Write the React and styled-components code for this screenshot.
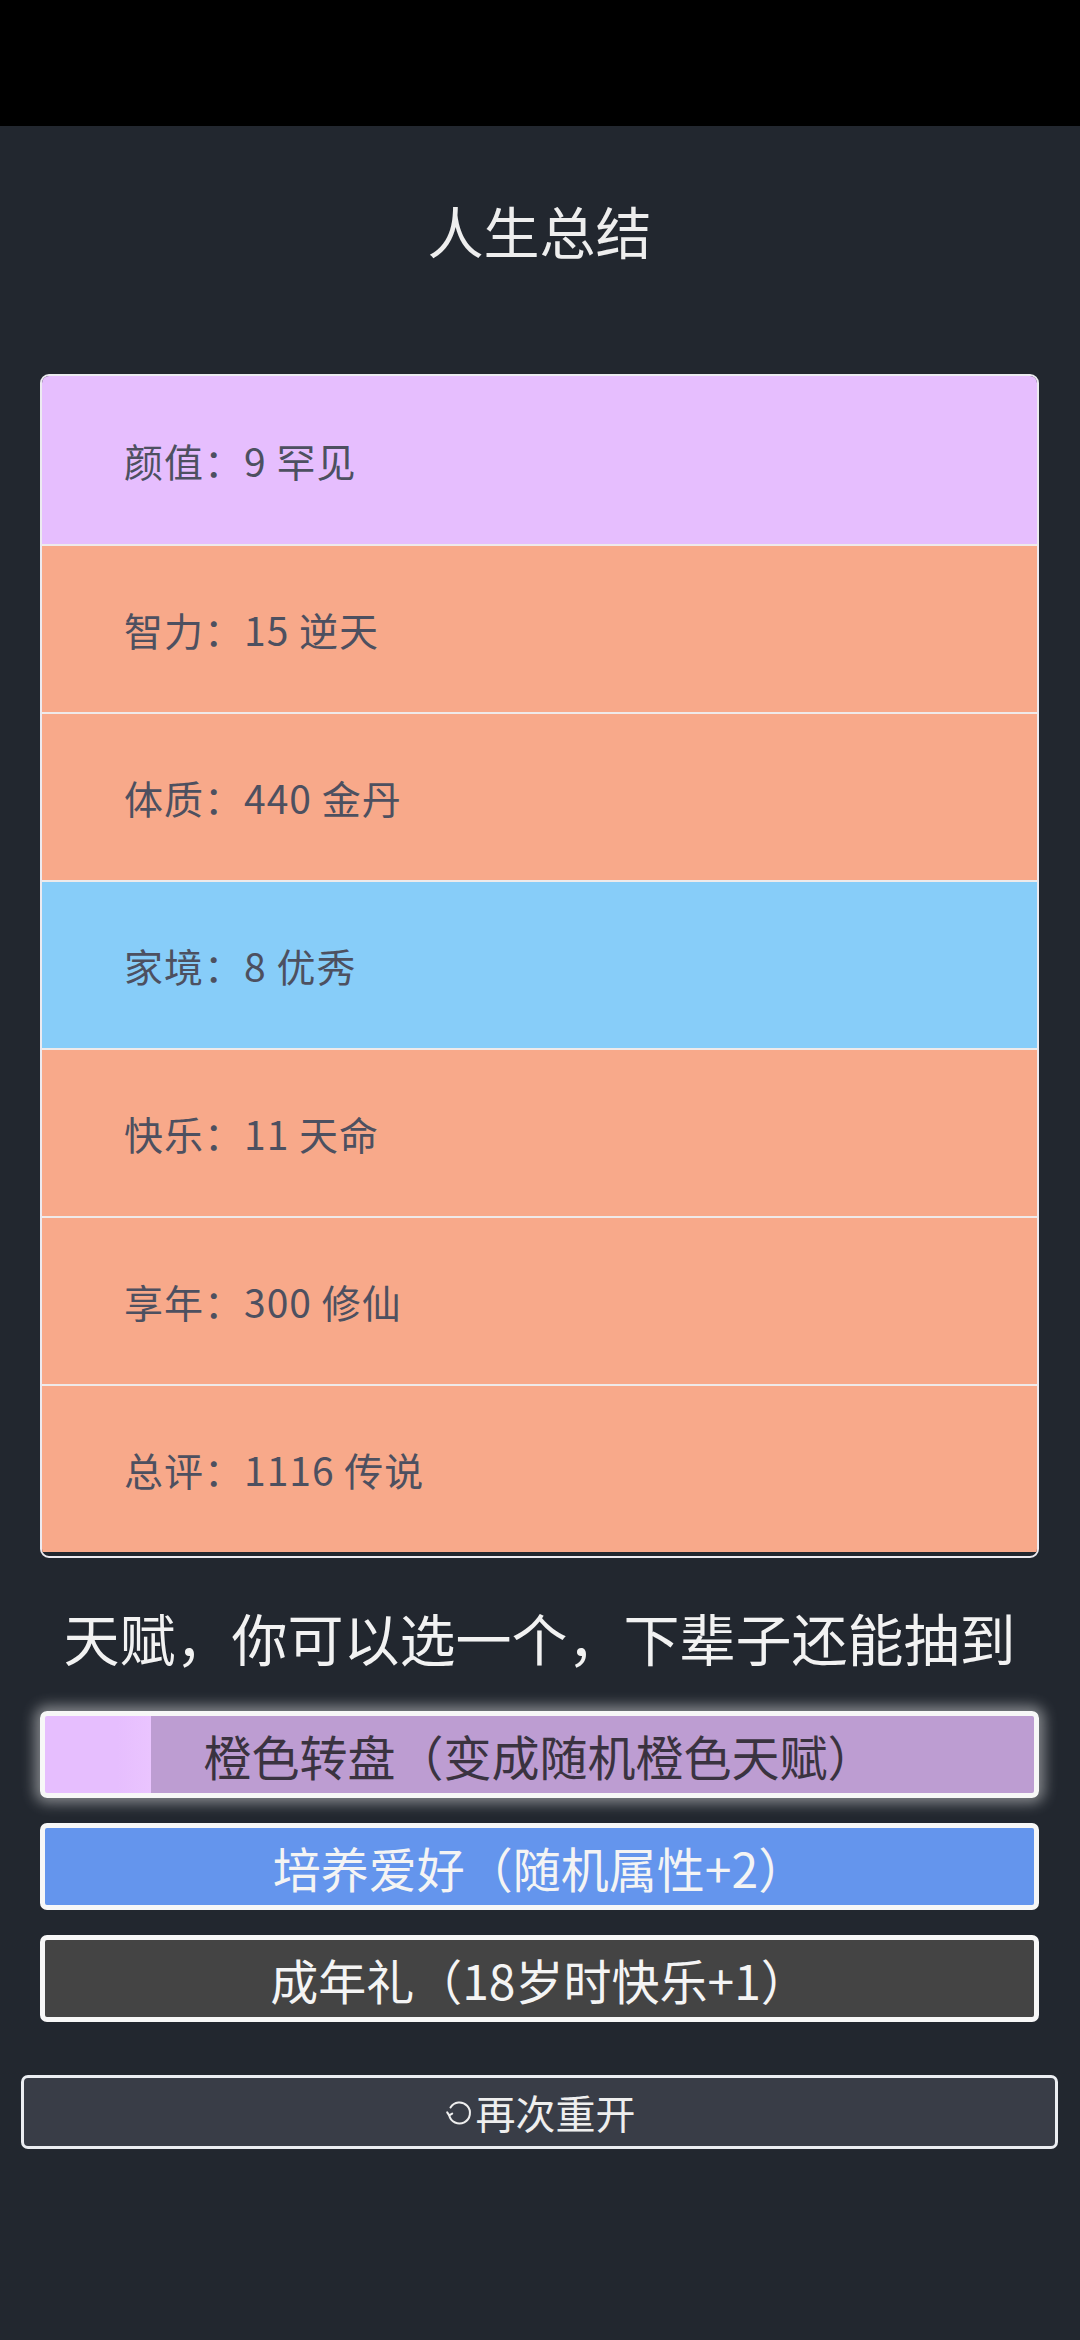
import React from "react"
import styled, { createGlobalStyle } from "styled-components"

const GlobalStyle = createGlobalStyle`
  html, body {
    margin: 0;
    padding: 0;
    background: #22272f;
  }
  body {
    font-family: "Noto Sans CJK SC", "Noto Sans", sans-serif;
  }
`

const StatusBar = styled.div`
  height: 126px;
  background: #000;
`

const Page = styled.div`
  min-height: 2214px;
  background: #22272f;
  padding-bottom: 1px;
`

const Main = styled.main`
  padding: 0 41px 0 40px;
`

const Title = styled.h1`
  margin: 71px 0 0;
  font-size: 56px;
  line-height: 65px;
  font-weight: 400;
  color: #eeeeee;
  text-align: center;
`

const Card = styled.ul`
  list-style: none;
  margin: 112px 0 0;
  padding: 0 0 4px;
  border: 2px solid #eceaf0;
  border-radius: 9px;
  overflow: hidden;
  background: #22272f;
`

const Row = styled.li`
  height: 168px;
  box-sizing: border-box;
  display: flex;
  align-items: center;
  padding-left: 82px;
  background: ${(p) => p.bg};
  border-top: ${(p) => (p.first ? "none" : "2px solid #efeaea")};
  font-size: 39px;
  letter-spacing: 1px;
  color: #4d5060;
`

const Heading = styled.h2`
  margin: 46px 0 0;
  font-size: 56px;
  line-height: 65px;
  font-weight: 400;
  color: #f2f2f2;
  text-align: center;
  white-space: nowrap;
`

const TalentList = styled.div`
  margin-top: 42px;
  display: flex;
  flex-direction: column;
  gap: 25px;
`

const Talent = styled.button`
  height: 87px;
  box-sizing: border-box;
  border: 5px solid #f7f7f7;
  border-radius: 7px;
  background: ${(p) => p.bg};
  color: ${(p) => p.fg};
  font-family: "Noto Sans CJK SC", "Noto Sans", sans-serif;
  font-size: 48px;
  line-height: 1;
  padding: 0;
  display: flex;
  align-items: center;
  justify-content: center;
  box-shadow: ${(p) =>
    p.selected ? "0 0 14px 5px rgba(255, 255, 255, 0.45)" : "none"};
`

const RestartWrap = styled.div`
  padding: 0 22px 0 21px;
  margin-top: 53px;
`

const Restart = styled.button`
  width: 100%;
  height: 74px;
  box-sizing: border-box;
  border: 3px solid #eceef2;
  border-radius: 7px;
  background: #393d47;
  color: #eeeeee;
  font-family: "Noto Sans CJK SC", "Noto Sans", sans-serif;
  font-size: 40px;
  display: flex;
  align-items: center;
  justify-content: center;
  gap: 2px;
  padding: 0;
`

const RestartIcon = () => (
  <svg width="30" height="30" viewBox="0 0 30 30" fill="none">
    <path
      d="M6.5 10.5 A10.5 10.5 0 1 1 5.2 18.2"
      stroke="#eeeeee"
      strokeWidth="2"
      strokeLinecap="round"
    />
    <path
      d="M3.2 15.4 L5.2 18.4 L8.2 16.6"
      stroke="#eeeeee"
      strokeWidth="2"
      strokeLinecap="round"
      strokeLinejoin="round"
    />
  </svg>
)

const PURPLE = "#e6befe"
const ORANGE = "#f8a98a"
const BLUE = "#87cdf9"

const stats = [
  { label: "颜值", value: "9 罕见", bg: PURPLE },
  { label: "智力", value: "15 逆天", bg: ORANGE },
  { label: "体质", value: "440 金丹", bg: ORANGE },
  { label: "家境", value: "8 优秀", bg: BLUE },
  { label: "快乐", value: "11 天命", bg: ORANGE },
  { label: "享年", value: "300 修仙", bg: ORANGE },
  { label: "总评", value: "1116 传说", bg: ORANGE },
]

const talents = [
  {
    text: "橙色转盘（变成随机橙色天赋）",
    bg: "linear-gradient(to right, #e6befe 0, #e6befe 72px, #eac4ff 106px, #bd9dd2 106px, #bd9dd2 100%)",
    fg: "#3a3340",
    selected: true,
  },
  { text: "培养爱好（随机属性+2）", bg: "#6495ed", fg: "#f4f4f4" },
  { text: "成年礼（18岁时快乐+1）", bg: "#444444", fg: "#f4f4f4" },
]

export default function App() {
  return (
    <>
      <GlobalStyle />
      <StatusBar />
      <Page>
        <Main>
          <Title>人生总结</Title>
          <Card>
            {stats.map((s, i) => (
              <Row key={s.label} bg={s.bg} first={i === 0}>
                {s.label}：{s.value}
              </Row>
            ))}
          </Card>
          <Heading>天赋，你可以选一个，下辈子还能抽到</Heading>
          <TalentList>
            {talents.map((t) => (
              <Talent key={t.text} bg={t.bg} fg={t.fg} selected={t.selected}>
                {t.text}
              </Talent>
            ))}
          </TalentList>
        </Main>
        <RestartWrap>
          <Restart>
            <RestartIcon />
            再次重开
          </Restart>
        </RestartWrap>
      </Page>
    </>
  )
}
